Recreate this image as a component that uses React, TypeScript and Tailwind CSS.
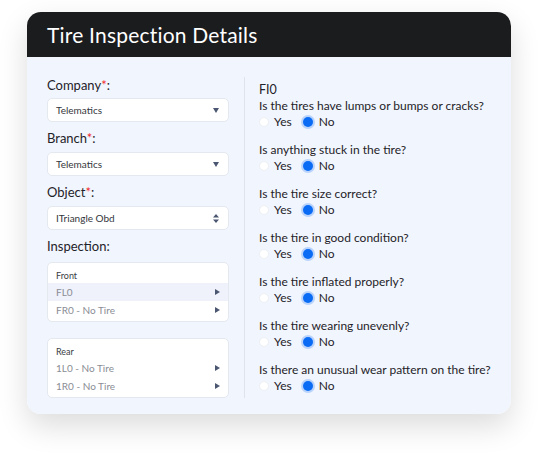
import React from 'react'

const questions = [
  'Is the tires have lumps or bumps or cracks?',
  'Is anything stuck in the tire?',
  'Is the tire size correct?',
  'Is the tire in good condition?',
  'Is the tire inflated properly?',
  'Is the tire wearing unevenly?',
  'Is there an unusual wear pattern on the tire?',
]

function Label({ text, required }: { text: string; required?: boolean }) {
  return (
    <div className="h-4 leading-4 text-[13px] text-[#1f2228]">
      {text}
      {required && <span className="text-[#ef2b2b]">*</span>}:
    </div>
  )
}

function Select({ value, updown }: { value: string; updown?: boolean }) {
  return (
    <div className="h-6 bg-white rounded-[5px] border border-[#e4e8ef] flex items-center justify-between pl-2 pr-[9px] text-[10px] text-[#33363c]">
      <span>{value}</span>
      {updown ? (
        <svg width="6" height="9" viewBox="0 0 6 9">
          <path d="M3 0 L6 3.5 H0 Z M0 5.5 H6 L3 9 Z" fill="#4b5670" />
        </svg>
      ) : (
        <svg width="6" height="5" viewBox="0 0 6 5">
          <path d="M0 0 H6 L3 5 Z" fill="#4b5670" />
        </svg>
      )}
    </div>
  )
}

function TireGroup({ title, items, active }: { title: string; items: string[]; active?: number }) {
  return (
    <div className="bg-white rounded-[5px] border border-[#e4e8ef] pt-[5px] pb-[2px]">
      <div className="px-2 h-[15px] leading-[15px] text-[9px] text-[#3a3d44]">{title}</div>
      {items.map((item, i) => (
        <div
          key={item}
          className={`px-2 h-[18px] flex items-center justify-between text-[10px] text-[#8a8d94] ${
            i === active ? 'bg-[#eff1fb]' : ''
          }`}
        >
          <span>{item}</span>
          <svg width="5" height="6" viewBox="0 0 5 6">
            <path d="M0 0 L5 3 L0 6 Z" fill="#4b5670" />
          </svg>
        </div>
      ))}
    </div>
  )
}

function Radio({ checked }: { checked?: boolean }) {
  return checked ? (
    <span className="w-[10px] h-[10px] rounded-full bg-[#0a6cf5] ring-2 ring-[#b9d3fb] inline-block" />
  ) : (
    <span className="w-[10px] h-[10px] rounded-full bg-white border border-[#eceff3] inline-block" />
  )
}

export default function App() {
  return (
    <div className="min-h-screen bg-white pt-3 pl-[27px]" style={{ fontFamily: 'Lato, "Open Sans", sans-serif' }}>
      <div className="w-[484px] rounded-[14px] overflow-hidden shadow-[0_12px_30px_rgba(0,0,0,0.14)]">
        {/* Header */}
        <div className="h-[45px] bg-[#1b1c1e] px-5 flex items-center">
          <h1 className="text-[21px] text-white tracking-[0.2px]">Tire Inspection Details</h1>
        </div>

        {/* Body */}
        <div className="bg-[#f1f6fe] flex pt-5 pb-4 px-5">
          <div className="w-[182px] shrink-0 flex flex-col">
            <Label text="Company" required />
            <div className="mt-[5px]">
              <Select value="Telematics" />
            </div>
            <div className="mt-2">
              <Label text="Branch" required />
            </div>
            <div className="mt-[6px]">
              <Select value="Telematics" />
            </div>
            <div className="mt-2">
              <Label text="Object" required />
            </div>
            <div className="mt-[6px]">
              <Select value="ITriangle Obd" updown />
            </div>
            <div className="mt-2 h-4 leading-4 text-[13px] text-[#1f2228]">Inspection:</div>
            <div className="mt-2">
              <TireGroup title="Front" items={['FL0', 'FR0 - No Tire']} active={0} />
            </div>
            <div className="mt-4">
              <TireGroup title="Rear" items={['1L0 - No Tire', '1R0 - No Tire']} />
            </div>
          </div>

          <div className="ml-[15px] w-px shrink-0 bg-[#dfe4ec]" />

          <div className="flex-1 pl-[14px] pt-[5px] text-[12px] text-[#1f2228] whitespace-nowrap">
            <div className="h-4 leading-4 text-[12.5px]">FI0</div>
            {questions.map((q, i) => (
              <div key={q} className={i > 0 ? 'mt-3' : ''}>
                <div className="h-4 leading-4">{q}</div>
                <div className="h-4 flex items-center">
                  <Radio />
                  <span className="ml-[5px] leading-4">Yes</span>
                  <span className="ml-[11px] flex">
                    <Radio checked />
                  </span>
                  <span className="ml-[6px] leading-4">No</span>
                </div>
              </div>
            ))}
          </div>
        </div>
      </div>
    </div>
  )
}
